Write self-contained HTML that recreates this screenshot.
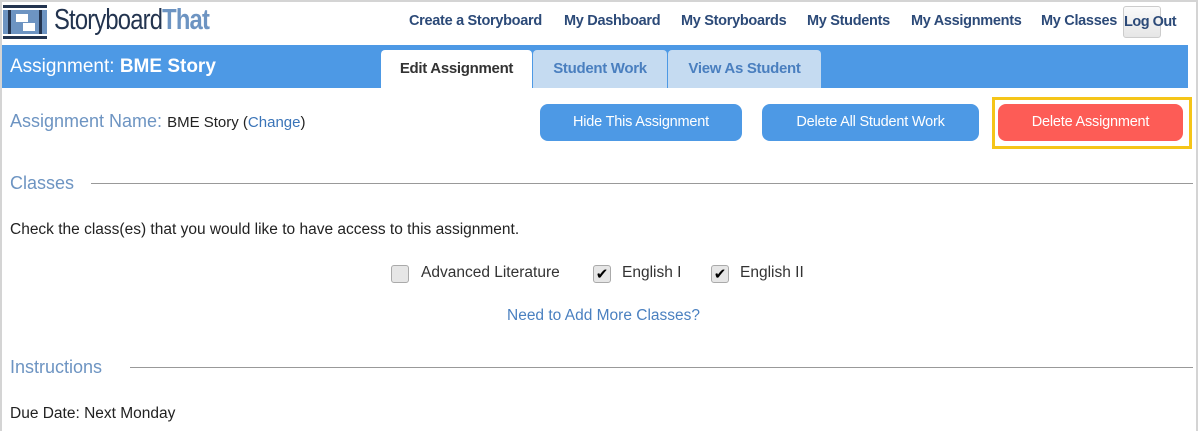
<!DOCTYPE html>
<html><head><style>
*{margin:0;padding:0;box-sizing:border-box}
body{width:1198px;height:431px;background:#fff;font-family:"Liberation Sans",sans-serif;position:relative;overflow:hidden}
.frame{position:absolute;left:0;top:0;width:1198px;height:431px;border:2px solid #d4d4d4;border-bottom:none}
.a{position:absolute;white-space:nowrap}
.nav{top:13px;font-size:14.5px;font-weight:bold;color:#2c4a78;letter-spacing:-0.3px}
.bar{left:2px;top:45px;width:1186px;height:43px;background:#4d99e5}
.tab{top:50px;height:38px;font-size:15px;font-weight:bold;text-align:center;line-height:38px;border-radius:4px 4px 0 0;letter-spacing:-0.3px}
.btn{top:104px;height:37px;background:#4d99e5;color:#fff;border-radius:8px;font-size:14.5px;text-align:center;line-height:37px;letter-spacing:-0.2px}
.cb{width:18px;height:18px;border:1px solid #aaa;border-radius:3px;background:#e6e6e6;top:265px}
.sec{font-size:17px;color:#6d94c2}
.line{height:1px;background:#999}
.t{font-size:15.5px;color:#222}
</style></head><body>
<div class="frame"></div>
<svg class="a" style="left:3px;top:5px" width="44" height="34" viewBox="0 0 44 34">
<rect x="0" y="0" width="44" height="3" fill="#23344f"/>
<rect x="0" y="31" width="44" height="3" fill="#23344f"/>
<rect x="0" y="5" width="44" height="24" fill="#6d94c2"/>
<rect x="5" y="5" width="3" height="24" fill="#23344f"/>
<rect x="36" y="5" width="3" height="24" fill="#23344f"/>
<rect x="13" y="9" width="12" height="8" fill="#fff"/>
<rect x="20" y="18" width="12" height="8" fill="#fff"/>
</svg>
<div class="a" style="left:54px;top:4px;font-size:29px;color:#23344f;letter-spacing:-1px;transform:scaleX(0.82);transform-origin:0 0">Storyboard<span style="color:#6d94c2;font-weight:bold">That</span></div>
<div class="a nav" style="left:409px">Create a Storyboard</div>
<div class="a nav" style="left:564px">My Dashboard</div>
<div class="a nav" style="left:681px">My Storyboards</div>
<div class="a nav" style="left:807px">My Students</div>
<div class="a nav" style="left:911px">My Assignments</div>
<div class="a nav" style="left:1041px">My Classes</div>
<div class="a" style="left:1123px;top:6px;height:32px;border:1px solid #ccc;border-radius:3px;background:linear-gradient(#fafafa,#e6e6e6);width:38px;font-size:14.5px;font-weight:bold;color:#2c4a78;line-height:30px;text-align:center;letter-spacing:-0.5px">Log Out</div>
<div class="a bar"></div>
<div class="a" style="left:10px;top:56px;font-size:19px;color:#fff">Assignment: <b>BME Story</b></div>
<div class="a tab" style="left:381px;width:151px;background:#fff;color:#333">Edit Assignment</div>
<div class="a tab" style="left:533px;width:134px;background:#c5dbf1;color:#4a7fbf">Student Work</div>
<div class="a tab" style="left:668px;width:153px;background:#c5dbf1;color:#4a7fbf">View As Student</div>
<div class="a" style="left:10px;top:111px;font-size:18px;color:#6d94c2">Assignment Name: <span style="font-size:15px;color:#222">BME Story (<span style="color:#3a74b8">Change</span>)</span></div>
<div class="a btn" style="left:540px;width:202px">Hide This Assignment</div>
<div class="a btn" style="left:762px;width:217px">Delete All Student Work</div>
<div class="a" style="left:992px;top:97px;width:200px;height:52px;border:3px solid #f5c518"></div>
<div class="a btn" style="left:998px;width:185px;background:#fd5c56">Delete Assignment</div>
<div class="a sec" style="left:10px;top:173px;font-size:18px">Classes</div>
<div class="a line" style="left:91px;top:183px;width:1102px"></div>
<div class="a t" style="left:10px;top:221px">Check the class(es) that you would like to have access to this assignment.</div>
<div class="a cb" style="left:391px"></div>
<div class="a t" style="left:421px;top:264px;color:#333">Advanced Literature</div>
<div class="a cb" style="left:593px;text-align:center;font-size:15px;line-height:17px">✔</div>
<div class="a t" style="left:622px;top:264px;color:#333">English I</div>
<div class="a cb" style="left:711px;text-align:center;font-size:15px;line-height:17px">✔</div>
<div class="a t" style="left:740px;top:264px;color:#333">English II</div>
<div class="a t" style="left:507px;top:307px;color:#4a80c0">Need to Add More Classes?</div>
<div class="a sec" style="left:10px;top:357px;font-size:18px">Instructions</div>
<div class="a line" style="left:130px;top:367px;width:1063px"></div>
<div class="a t" style="left:10px;top:405px">Due Date: Next Monday</div>
</body></html>
